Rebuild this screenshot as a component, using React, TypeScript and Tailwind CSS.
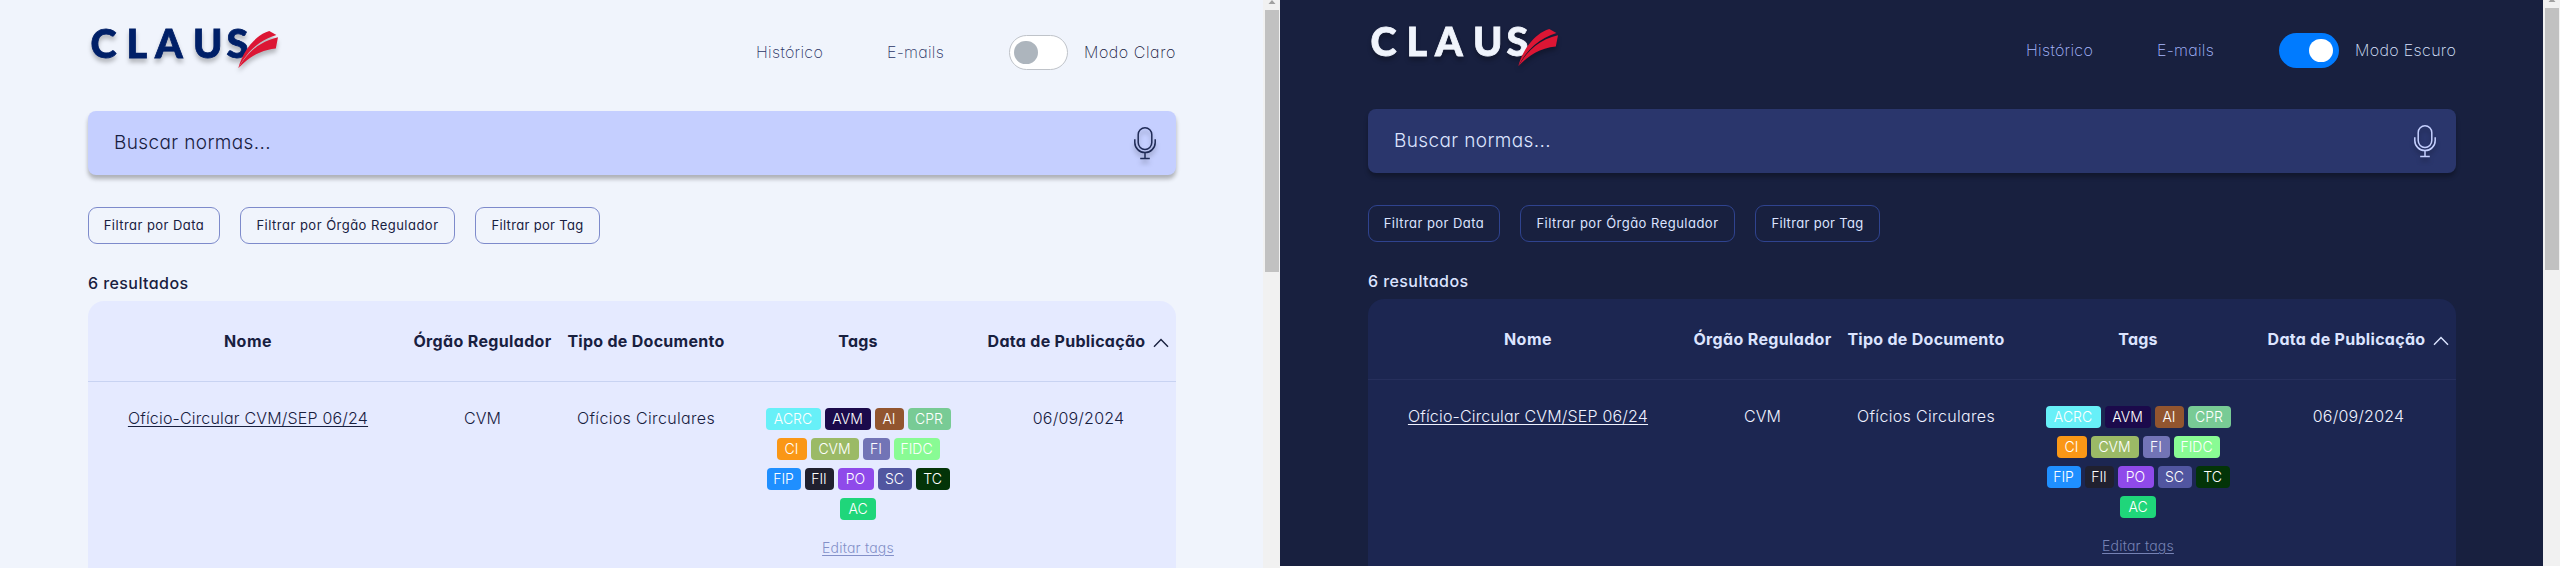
import clsx from "clsx";

type Mode = "light" | "dark";

const tagRows: { label: string; style: string }[][] = [
  [
    { label: "ACRC", style: "w-[55px] bg-[#67f0f8]" },
    { label: "AVM", style: "w-[46px] bg-[#1b0a4b]" },
    { label: "AI", style: "w-[29px] bg-[#92552f]" },
    { label: "CPR", style: "w-[43px] bg-[#78cb95]" },
  ],
  [
    { label: "CI", style: "w-[30px] bg-[#fa9716]" },
    { label: "CVM", style: "w-[48px] bg-[#9bba66]" },
    { label: "FI", style: "w-[27px] bg-[#7274b6]" },
    { label: "FIDC", style: "w-[46px] bg-[#89fb94]" },
  ],
  [
    { label: "FIP", style: "w-[34px] bg-[#1f8fff]" },
    { label: "FII", style: "w-[29px] bg-[#20202f]" },
    { label: "PO", style: "w-[36px] bg-[#8f4aea]" },
    { label: "SC", style: "w-[34px] bg-[#5156a0]" },
    { label: "TC", style: "w-[34px] bg-[#033408]" },
  ],
  [{ label: "AC", style: "w-[36px] bg-[#1fd67a]" }],
];

const columns = "grid grid-cols-[320px_149px_178px_246px_195px]";

function Logo({ dark }: { dark: boolean }) {
  const ink = dark ? "#f0f4fc" : "#002068";
  return (
    <svg
      viewBox="0 0 200 105"
      className="h-[105px] w-[200px] shrink-0 drop-shadow-[0_4px_2px_rgba(0,0,0,0.25)]"
    >
      <text
        x="2.5 38.5 67 105 138.5"
        y="57.8"
        fontFamily="Lato, sans-serif"
        fontWeight="900"
        fontSize="39.5"
        fill={ink}
        stroke={ink}
        strokeWidth="0.8"
      >
        CLAUS
      </text>
      <path
        d="M150.3 68.3C154 54 165 36 181.3 31L188.4 35C172 40 159 51 150.3 68.3Z"
        fill="#dc1634"
      />
      <path
        d="M190 37.2L187.8 48.4C172 50 161 57 150.3 68.3C160 51 173 41 190 37.2Z"
        fill="#dc1634"
      />
    </svg>
  );
}

function Mic({ dark }: { dark: boolean }) {
  return (
    <svg
      viewBox="0 0 24 34"
      fill="none"
      strokeWidth="1.5"
      className={clsx(
        "h-[34px] w-6 drop-shadow-[0_4px_2px_rgba(0,0,0,0.25)]",
        dark ? "stroke-[#c5d0ff]" : "stroke-[#1f2a56]",
      )}
    >
      <rect x="5.2" y="1.8" width="13.6" height="21.6" rx="6.8" />
      <path d="M1.8 13.2v3.2a10.2 10.2 0 0 0 20.4 0v-3.2M12 26.6v6M7.2 32.4h9.6" />
    </svg>
  );
}

function Scrollbar() {
  return (
    <div className="flex h-full w-[17px] shrink-0 flex-col items-end bg-[#f1f1f1] pr-px">
      <svg viewBox="0 0 14 10" className="h-[10px] w-[14px]">
        <path d="M3.5 4L7 0l3.500 4z" fill="#a0a0a0" />
      </svg>
      <div className="h-[262px] w-[14px] bg-[#c1c1c1]" />
    </div>
  );
}

function Switch({ on }: { on: boolean }) {
  return (
    <div
      className={clsx(
        "flex h-[35px] items-center rounded-full",
        on ? "w-[60px] justify-end bg-[#007bff] pr-1.5" : "w-[59px] border border-[#bfc3c9] bg-white pl-1",
      )}
    >
      <div className={clsx("h-[23px] w-6 rounded-full", on ? "bg-white" : "bg-[#adb5bd]")} />
    </div>
  );
}

function FilterButton({ dark, label, className }: { dark: boolean; label: string; className: string }) {
  return (
    <button
      className={clsx(
        "flex h-[37px] items-center justify-center rounded-[9px] border text-[13px] whitespace-nowrap",
        dark ? "border-[#2f438f]" : "border-[#7d8acb]",
        className,
      )}
    >
      {label}
    </button>
  );
}

function Screen({ mode }: { mode: Mode }) {
  const dark = mode === "dark";
  const link = dark ? "text-[#a9baff]" : "text-[#2b3566]";
  return (
    <div
      className={clsx(
        "flex h-[568px] w-[1280px]",
        dark ? "bg-[#18203f] text-[#dce4ff]" : "bg-[#f0f4fc] text-[#18203f]",
      )}
    >
      <div className="h-full flex-1 pl-[88px]">
        <div className="flex w-[1088px] flex-col">
          <header className="flex h-[105px] items-center">
            <Logo dark={dark} />
            <nav className="ml-auto flex items-center text-base font-extralight">
              <a className={clsx("w-[67px] pb-0.5 tracking-[0.31px] whitespace-nowrap", link)}>Histórico</a>
              <a className={clsx("ml-16 w-[57px] pb-0.5 tracking-[0.25px] whitespace-nowrap", link)}>E-mails</a>
              <div className="ml-[65px] flex items-center gap-4">
                <Switch on={dark} />
                <span
                  className={clsx(
                    "pb-0.5 whitespace-nowrap",
                    dark ? "w-[101px] tracking-[0.35px]" : "w-[92px] tracking-[0.55px]",
                  )}
                >
                  {dark ? "Modo Escuro" : "Modo Claro"}
                </span>
              </div>
            </nav>
          </header>

          <div
            className={clsx(
              "mt-1.5 flex h-16 items-center justify-between rounded-lg pr-[19px] pl-[26px] shadow-[0_4px_4px_rgba(0,0,0,0.28)]",
              dark ? "bg-[#2a366c]" : "bg-[#c5cfff]",
            )}
          >
            <span className="text-[19px] font-[350] tracking-[0.38px]">Buscar normas...</span>
            <Mic dark={dark} />
          </div>

          <div className="mt-8 flex gap-5">
            <FilterButton dark={dark} label="Filtrar por Data" className="w-[132px] tracking-[0.45px]" />
            <FilterButton dark={dark} label="Filtrar por Órgão Regulador" className="w-[215px] tracking-[0.48px]" />
            <FilterButton dark={dark} label="Filtrar por Tag" className="w-[125px] tracking-[0.33px]" />
          </div>

          <p className="mt-[27px] text-base leading-6 font-medium tracking-[0.42px]">6 resultados</p>

          <div className={clsx("mt-1.5 h-[267px] rounded-t-2xl", dark ? "bg-[#1c2651]" : "bg-[#e5eaff]")}>
            <div
              className={clsx(
                columns,
                "h-[81px] items-center border-b text-center text-base font-bold whitespace-nowrap",
                dark ? "border-[#262f5c]" : "border-[#c8d3f2]",
              )}
            >
              <span className="tracking-[0.5px]">Nome</span>
              <span className="tracking-[0.35px]">Órgão Regulador</span>
              <span className="tracking-[0.28px]">Tipo de Documento</span>
              <span className="tracking-[0.2px]">Tags</span>
              <span className="flex items-center justify-center gap-2 tracking-[0.3px]">
                Data de Publicação
                <svg viewBox="0 0 16 10" className="mt-1 h-[10px] w-4" fill="none" stroke="currentColor" strokeWidth="1.4">
                  <path d="M1 8.800L8 1.400l7 7.400" />
                </svg>
              </span>
            </div>

            <div
              className={clsx(
                columns,
                "pt-6 text-center text-base leading-6 font-light whitespace-nowrap",
                dark ? "text-[#eef1ff]" : "text-[#18203f]",
              )}
            >
              <span className="tracking-[0.18px] underline decoration-1 underline-offset-2">
                Ofício-Circular CVM/SEP 06/24
              </span>
              <span>CVM</span>
              <span className="tracking-[0.34px]">Ofícios Circulares</span>
              <div className="flex flex-col items-center gap-2 pt-0.5 text-sm">
                {tagRows.map((row, i) => (
                  <div key={i} className="flex gap-1">
                    {row.map((tag) => (
                      <span
                        key={tag.label}
                        className={clsx("flex h-[22px] items-center justify-center rounded text-white", tag.style)}
                      >
                        {tag.label}
                      </span>
                    ))}
                  </div>
                ))}
                <a
                  className={clsx(
                    "mt-2.5 leading-5 tracking-[0.2px] underline decoration-1 underline-offset-2",
                    dark ? "text-[#7682b4]" : "text-[#8390c8]",
                  )}
                >
                  Editar tags
                </a>
              </div>
              <span className="tracking-[0.2px]">06/09/2024</span>
            </div>
          </div>
        </div>
      </div>
      <Scrollbar />
    </div>
  );
}

export default function App() {
  return (
    <div className="flex h-[568px] w-[2560px] items-start overflow-hidden bg-white font-['Inter',sans-serif] [font-feature-settings:'cv11']">
      <Screen mode="light" />
      <div className="h-[566px] overflow-hidden">
        <div className="-mt-0.5">
          <Screen mode="dark" />
        </div>
      </div>
    </div>
  );
}
